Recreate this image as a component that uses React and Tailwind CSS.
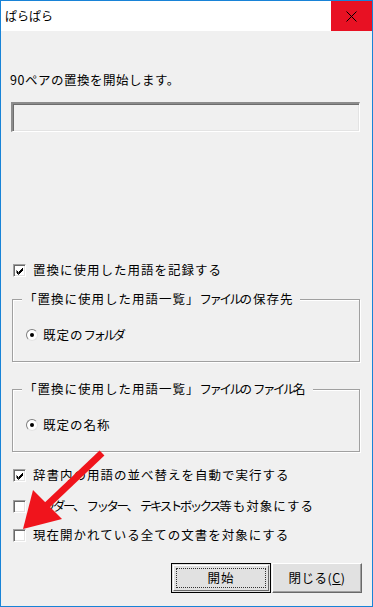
import React from 'react'

// katakana in the reference font runs narrower than kanji/kana
function Texto({ s }) {
  return s.split(/([ァ-ヶー]+)/).map((parte, i) =>
    /^[ァ-ヶー]+$/.test(parte)
      ? <span key={i} className="tracking-[-2.5px]">{parte}</span>
      : <React.Fragment key={i}>{parte}</React.Fragment>
  )
}

function CheckBox({ checked }) {
  return (
    <span className="relative w-[13px] h-[13px] shrink-0 bg-white border-t border-l border-t-[#a0a0a0] border-l-[#a0a0a0] border-r border-b border-r-white border-b-white shadow-[inset_1px_1px_0_#696969,inset_-1px_-1px_0_#e3e3e3]">
      {checked && (
        <svg className="absolute left-[1px] top-[1px]" width="10" height="10" viewBox="0 0 10 10">
          <path d="M1.5 4.5 L3.5 6.5 L8 2 M1.5 5.5 L3.5 7.5 L8 3 M1.5 6.5 L3.5 8.5 L8 4" stroke="#000" strokeWidth="1" fill="none" />
        </svg>
      )}
    </span>
  )
}

function Radio() {
  return (
    <span className="relative w-[12px] h-[12px] shrink-0 rounded-full bg-white border border-t-[#808080] border-l-[#808080] border-r-[#e3e3e3] border-b-[#e3e3e3] flex items-center justify-center">
      <span className="w-[4px] h-[4px] rounded-full bg-black" />
    </span>
  )
}

function Fila({ checked, texto, className }) {
  return (
    <div className={`flex items-center h-[16px] ml-[12px] ${className}`}>
      <CheckBox checked={checked} />
      <span className="ml-[7px] leading-[16px] whitespace-nowrap"><Texto s={texto} /></span>
    </div>
  )
}

function Grupo({ titulo, opcion, className }) {
  return (
    <div className={`relative ml-[11px] w-[348px] h-[63px] border border-[#a0a0a0] shadow-[inset_1px_1px_0_white,1px_1px_0_white] ${className}`}>
      <span className="absolute left-[9px] top-[-9px] bg-[#f0f0f0] pl-[2px] pr-[6px] leading-[16px] whitespace-nowrap"><Texto s={titulo} /></span>
      <div className="flex items-center h-[16px] mt-[27px] ml-[13px]">
        <Radio />
        <span className="ml-[5px] leading-[16px]"><Texto s={opcion} /></span>
      </div>
    </div>
  )
}

export default function App() {
  return (
    <div className="relative w-[373px] h-[607px] border border-[#1883d7] bg-[#f0f0f0] flex flex-col text-[12.5px] tracking-[1px] text-black font-['Noto_Sans_CJK_JP',sans-serif]">
      <div className="flex items-center h-[30px] bg-white">
        <span className="ml-[4px] tracking-[0px] text-[12px]">ぱらぱら</span>
        <div className="ml-auto w-[41px] h-full bg-[#e81123] flex items-center justify-center">
          <svg width="11" height="11" viewBox="0 0 11 11">
            <path d="M0.5 0.5 L10.5 10.5 M10.5 0.5 L0.5 10.5" stroke="#000" strokeWidth="1" />
          </svg>
        </div>
      </div>

      <div className="mt-[41px] ml-[9px] h-[16px] leading-[16px] tracking-[0.5px]">90ペアの置換を開始します。</div>

      <div className="mt-[14px] ml-[10px] w-[349px] h-[30px] border-t-2 border-l-2 border-t-[#8c8c8c] border-l-[#8c8c8c] border-r border-b border-r-white border-b-white shadow-[inset_1px_1px_0_#6d6d6d,inset_-1px_-1px_0_#e3e3e3]" />

      <Fila checked texto="置換に使用した用語を記録する" className="mt-[130px]" />

      <Grupo titulo="「置換に使用した用語一覧」ファイルの保存先" opcion="既定のフォルダ" className="mt-[21px]" />
      <Grupo titulo="「置換に使用した用語一覧」ファイルのファイル名" opcion="既定の名称" className="mt-[27px]" />

      <Fila checked texto="辞書内の用語の並べ替えを自動で実行する" className="mt-[15px]" />
      <Fila texto="ヘッダー、フッター、テキストボックス等も対象にする" className="mt-[15px]" />
      <Fila texto="現在開かれている全ての文書を対象にする" className="mt-[13px]" />

      <div className="mt-[20px] flex gap-[1px] ml-[170px]">
        <button className="w-[100px] h-[30px] border border-black bg-[#e1e1e1] p-[1px]">
          <div className="w-full h-full border border-t-white border-l-white border-r-[#696969] border-b-[#696969] p-[2px]">
            <div className="w-full h-full border border-dotted border-[#333] flex items-center justify-center leading-none">開始</div>
          </div>
        </button>
        <button className="w-[90px] h-[30px] bg-[#e1e1e1] border border-t-white border-l-white border-r-[#696969] border-b-[#696969] shadow-[inset_-1px_-1px_0_#a0a0a0] flex items-center justify-center leading-none tracking-[0.5px]">
          閉じる(<span className="underline">C</span>)
        </button>
      </div>

      <svg className="absolute left-0 top-0 pointer-events-none" width="373" height="607" viewBox="0 0 373 607">
        <line x1="101" y1="452" x2="42" y2="508" stroke="#f0141c" strokeWidth="7" />
        <polygon points="22,528 32,489 61,518" fill="#f0141c" />
      </svg>
    </div>
  )
}
